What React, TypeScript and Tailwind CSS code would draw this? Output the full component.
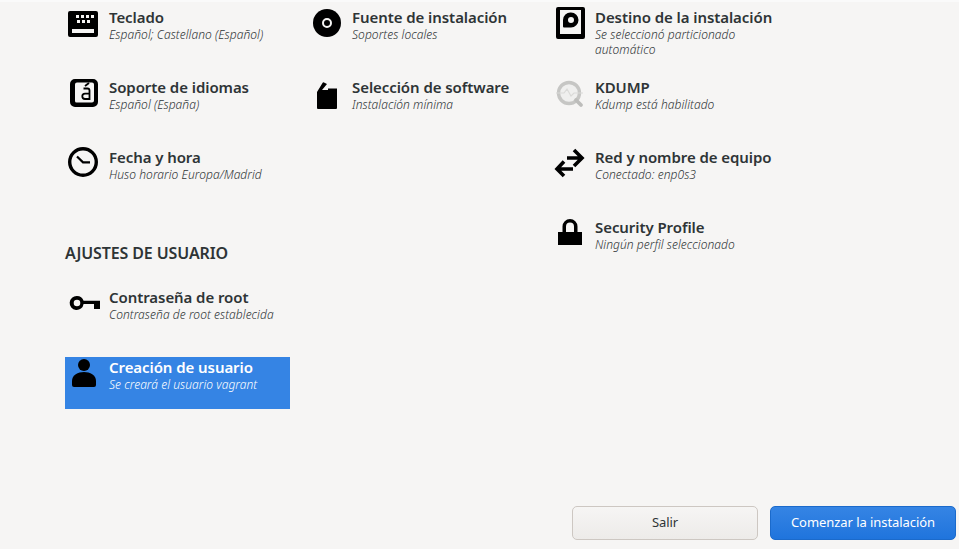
const font = "font-['Noto_Sans',sans-serif]";

function Icon(props: { children: React.ReactNode }) {
	return (
		<svg width="32" height="32" viewBox="0 0 32 32" className="overflow-visible">
			{props.children}
		</svg>
	);
}

function KeyboardIcon() {
	return (
		<Icon>
			<path fill="#000" fillRule="evenodd" d="M2 4h26a2 2 0 0 1 2 2v22a2 2 0 0 1-2 2H2a2 2 0 0 1-2-2V6a2 2 0 0 1 2-2zM4 22v4h22v-4zM8 8v3h3V8zm5 0v3h3V8zm5 0v3h3V8zm5 0v3h3V8zM9 13v3h3v-3zm5 0v3h3v-3zm5 0v3h3v-3z" />
		</Icon>
	);
}

function LanguageIcon() {
	return (
		<Icon>
			<path fill="#000" fillRule="evenodd" d="M7 2h18a5 5 0 0 1 5 5v18a5 5 0 0 1-5 5H7a5 5 0 0 1-5-5V7a5 5 0 0 1 5-5zM9 5.500a2 2 0 0 0-2 2V24a1.500 1.500 0 0 0 1.500 1.500H24a2 2 0 0 0 2-2V7.500a2 2 0 0 0-2-2z" />
			<path fill="none" stroke="#000" strokeWidth="1.8" d="M15.500 11.500h4a2 2 0 0 1 2 2V22h-4.500a2.500 2.500 0 0 1 0-5.400h4.500" />
			<path fill="none" stroke="#000" strokeWidth="1.8" d="M17 9l4-3" />
		</Icon>
	);
}

function ClockIcon() {
	return (
		<Icon>
			<circle cx="15" cy="15" r="13.300" fill="none" stroke="#000" strokeWidth="3.400" />
			<path fill="none" stroke="#000" strokeWidth="2.200" d="M9 9.500l6 5.800h7" />
		</Icon>
	);
}

function DiscIcon() {
	return (
		<Icon>
			<circle cx="16" cy="16" r="14" fill="#000" />
			<circle cx="16" cy="16" r="4" fill="none" stroke="#f6f5f4" strokeWidth="2" />
		</Icon>
	);
}

function PackageIcon() {
	return (
		<Icon>
			<path fill="#000" d="M6 15L11.500 6q.5-1 1.500-.5L16 7l-5 6h6v-1.500h9V31a1 1 0 0 1-1 1H7a1 1 0 0 1-1-1z" />
		</Icon>
	);
}

function DiskIcon() {
	return (
		<Icon>
			<path fill="#000" fillRule="evenodd" d="M4 0h25a2 2 0 0 1 2 2v28a2 2 0 0 1-2 2H4a2 2 0 0 1-2-2V2a2 2 0 0 1 2-2zM6 3v24h21V3z" />
			<path fill="#000" fillRule="evenodd" d="M17 5.500a7.500 7.500 0 0 1 0 15h-7a1 1 0 0 1-1-1V13a7.500 7.500 0 0 1 8-7.500zm0 4.500a3 3 0 1 0 0 6 3 3 0 0 0 0-6z" />
		</Icon>
	);
}

function KdumpIcon() {
	return (
		<Icon>
			<circle cx="15" cy="16" r="10.500" fill="#efefee" stroke="#c6c6c4" strokeWidth="3.400" />
			<path fill="none" stroke="#dadad8" strokeWidth="1.200" d="M2 16h8l3-4 4 7 3-3h9" />
			<path fill="none" stroke="#bdbdbb" strokeWidth="3.800" strokeLinecap="round" d="M22 23l5 5" />
		</Icon>
	);
}

function ArrowsIcon() {
	return (
		<Icon>
			<path fill="none" stroke="#000" strokeWidth="3.600" d="M13 11h15M20 3l8 8-8 8" />
			<path fill="none" stroke="#000" strokeWidth="3.600" d="M19 22H4M10 14.500l-7 7.500 7 7" />
		</Icon>
	);
}

function LockIcon() {
	return (
		<Icon>
			<path fill="#000" fillRule="evenodd" d="M4 15h4.500V9.500a7.500 7.500 0 0 1 15 0V15H28v13H4zM12 15h8V9.500a4 4 0 0 0-8 0z" />
		</Icon>
	);
}

function KeyIcon() {
	return (
		<Icon>
			<path fill="#000" fillRule="evenodd" d="M9 9a7 7 0 0 1 6.600 4.700H32V22h-6v-5h-10.400A7 7 0 1 1 9 9zm0 3.700a3.300 3.300 0 1 0 0 6.600 3.300 3.300 0 0 0 0-6.600z" />
		</Icon>
	);
}

function UserIcon() {
	return (
		<Icon>
			<circle cx="16" cy="8" r="6" fill="#000" />
			<path fill="#000" d="M4 28v-4c0-6 6-9 12-9s12 3 12 9v4a2 2 0 0 1-2 2H6a2 2 0 0 1-2-2z" />
		</Icon>
	);
}

type SpokeProps = {
	icon: React.ReactNode;
	title: string;
	status: string;
	selected?: boolean;
};

function Spoke(props: SpokeProps) {
	return (
		<div
			className={`flex h-[52px] w-[225px] gap-[9px] pl-[3px] ${props.selected ? "bg-[#3584e4] text-white" : "text-[#2e3436]"}`}
		>
			<div className="h-8 w-8 shrink-0">{props.icon}</div>
			<div className="flex min-w-0 flex-col">
				<div className="text-[15px] font-semibold leading-[21px] tracking-[-0.07px]">{props.title}</div>
				<div className="-mt-px text-[12px] font-light italic leading-[15px] tracking-[0.05px]">{props.status}</div>
			</div>
		</div>
	);
}

export default function App() {
	return (
		<div className={`flex h-[549px] w-[959px] flex-col overflow-hidden bg-[#f6f5f4] ${font}`}>
			<div className="h-[2px] shrink-0 bg-[#fafafa]" />
			<div className="grid grid-cols-[225px_225px_225px] grid-rows-[repeat(6,52px)] gap-x-[18px] gap-y-[18px] pl-[65px] pt-[5px]">
				<Spoke icon={<KeyboardIcon />} title="Teclado" status="Español; Castellano (Español)" />
				<Spoke icon={<DiscIcon />} title="Fuente de instalación" status="Soportes locales" />
				<Spoke icon={<DiskIcon />} title="Destino de la instalación" status="Se seleccionó particionado automático" />
				<Spoke icon={<LanguageIcon />} title="Soporte de idiomas" status="Español (España)" />
				<Spoke icon={<PackageIcon />} title="Selección de software" status="Instalación mínima" />
				<Spoke icon={<KdumpIcon />} title="KDUMP" status="Kdump está habilitado" />
				<Spoke icon={<ClockIcon />} title="Fecha y hora" status="Huso horario Europa/Madrid" />
				<div />
				<Spoke icon={<ArrowsIcon />} title="Red y nombre de equipo" status="Conectado: enp0s3" />
				<div className="self-end pb-[5px] text-[16px] font-semibold leading-[22px] tracking-[-0.12px] text-[#2e3436]">AJUSTES DE USUARIO</div>
				<div />
				<Spoke icon={<LockIcon />} title="Security Profile" status="Ningún perfil seleccionado" />
				<Spoke icon={<KeyIcon />} title="Contraseña de root" status="Contraseña de root establecida" />
				<div />
				<div />
				<Spoke icon={<UserIcon />} title="Creación de usuario" status="Se creará el usuario vagrant" selected />
			</div>
			<div className="mt-auto flex justify-end gap-3 pb-[9px] pr-[3px]">
				<button className="h-[34px] w-[186px] rounded-[5px] border border-[#cdc7c2] bg-gradient-to-b from-[#f6f5f4] to-[#edebe9] text-[13px] tracking-[-0.06px] text-[#2e3436]">
					Salir
				</button>
				<button className="h-[34px] w-[186px] rounded-[5px] border border-[#1b6acb] bg-gradient-to-b from-[#3584e4] to-[#1f74dd] text-[13px] tracking-[-0.06px] text-white">
					Comenzar la instalación
				</button>
			</div>
		</div>
	);
}
